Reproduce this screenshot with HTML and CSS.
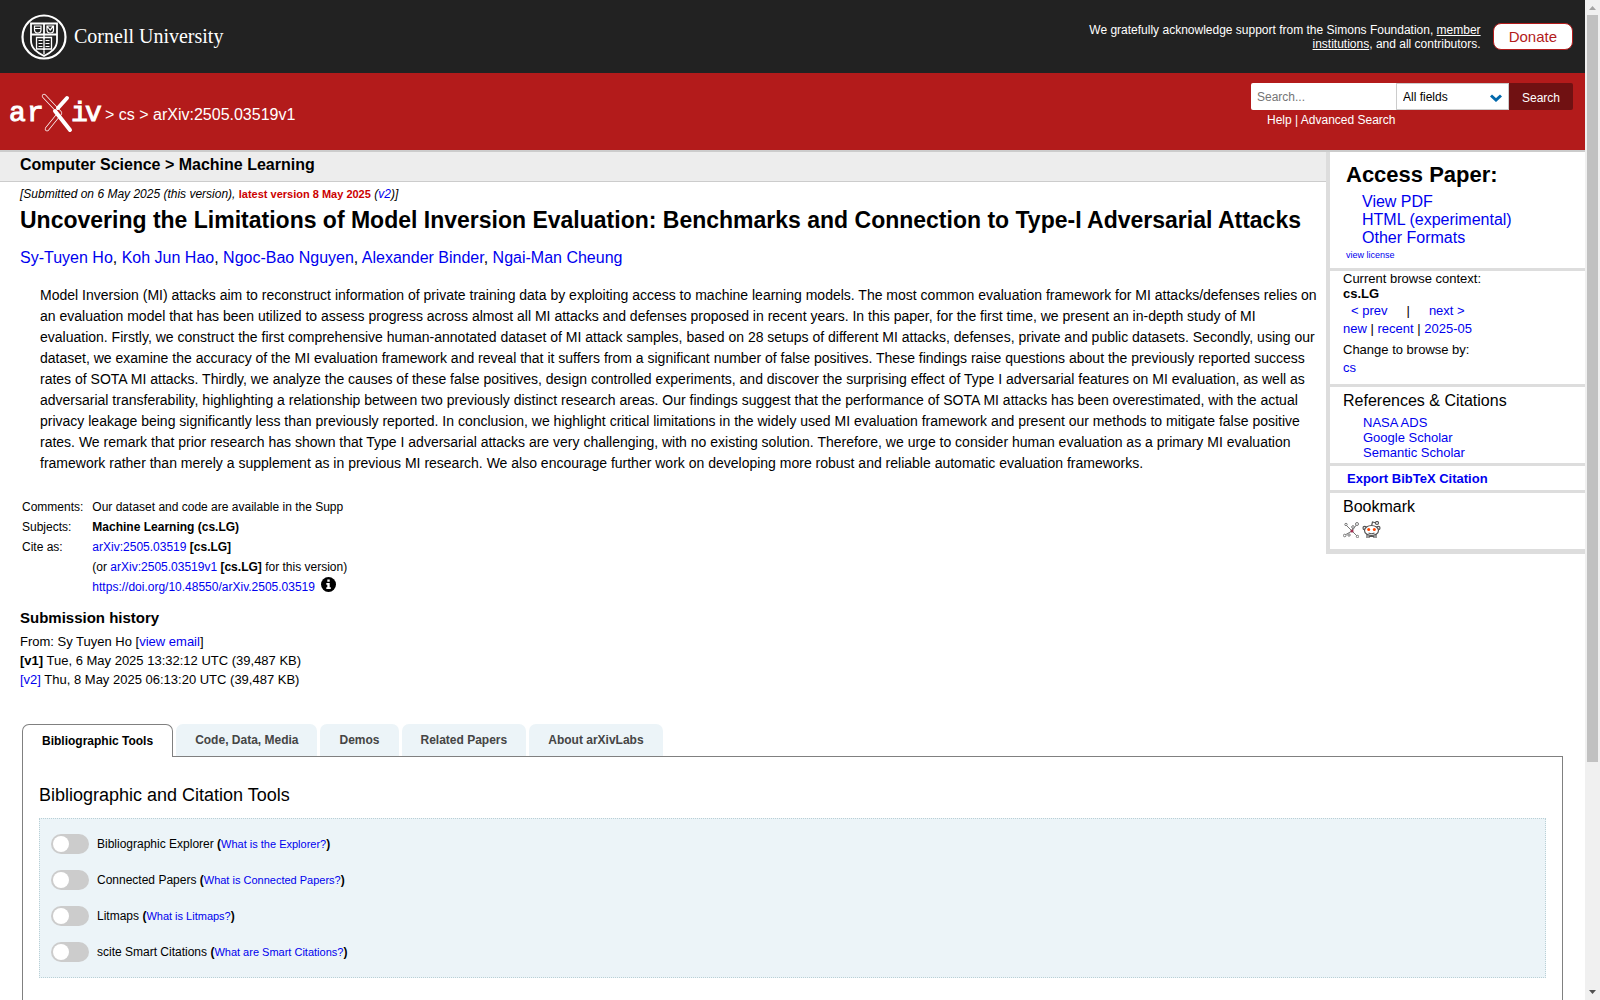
FILE: index.html
```html
<!DOCTYPE html>
<html lang="en">
<head>
<meta charset="utf-8">
<title>[2505.03519v1] Uncovering the Limitations of Model Inversion Evaluation</title>
<link rel="stylesheet" href="styles.css">
</head>
<body>
<div class="page">
  <header>
    <div class="cornell-bar">
      <a class="cornell" href="#">
        <svg width="46" height="46" viewBox="0 0 46 46" fill="none" stroke="#fff" aria-hidden="true">
          <circle cx="23" cy="23" r="21.5" stroke-width="2.200"/>
          <path stroke-width="1.800" d="M10 9.500h26v17c0 8-6 12-13 15.500c-7-3.500-13-7.500-13-15.500zM10 20.500h26M23 9.500v11"/>
          <path stroke-width="1.200" d="M13.500 12h6.500v4c0 2-1.500 3-3.200 3s-3.300-1-3.300-3zM14 14.500h6M26 12h6.500v4c0 2-1.500 3-3.200 3s-3.300-1-3.300-3zM26 12l3.200 4 3.300-4"/>
          <path stroke-width="1.300" d="M15.500 23.500h6.500l1 1 1-1h6.500v11.500h-6.500l-1 1-1-1h-6.500zM23 20.500v20"/>
          <path stroke-width="1" d="M17.500 26.500h4M17.500 29.500h4M17.500 32.500h4M24.500 26.500h4M24.500 29.500h4M24.500 32.500h4"/>
        </svg>
        <span>Cornell University</span>
      </a>
      <div class="support">
        <p>We gratefully acknowledge support from the Simons Foundation, <a href="#">member institutions</a>, and all contributors.</p>
        <a class="donate" href="#">Donate</a>
      </div>
    </div>
    <div class="brand-bar">
      <div class="crumbs">
        <a href="#" class="logo" aria-label="arXiv">
          <svg width="93" height="42" viewBox="0 0 93 42" aria-hidden="true">
            <g class="logo-text"><text x="-1 17" y="28">ar</text><text x="61 75" y="28">iv</text></g>
            <g fill="none" stroke-linecap="round" stroke-linejoin="round">
              <path stroke="#fff" stroke-width="4.400" d="M34 3L50 20L37 36"/>
              <path stroke="#b31b1b" stroke-width="3" d="M34 3L50 20L37 36"/>
              <path stroke="#fff" stroke-width="4" d="M57 5L48 15M45 18L60 37"/>
            </g>
          </svg>
        </a>
        <span>&gt; <a href="#">cs</a> &gt; arXiv:2505.03519v1</span>
      </div>
      <form class="search">
        <div class="search-row">
          <input type="text" placeholder="Search..." aria-label="Search term">
          <div class="select-wrap">
            <select aria-label="Field to search"><option>All fields</option></select>
            <svg width="12" height="8" viewBox="0 0 12 8" aria-hidden="true"><path d="M1 1.500L6 6l5-4.500" fill="none" stroke="#0068ac" stroke-width="3"/></svg>
          </div>
          <button type="button">Search</button>
        </div>
        <p><a href="#">Help</a> | <a href="#">Advanced Search</a></p>
      </form>
    </div>
  </header>

  <div class="content">
    <main>
      <div class="subject">Computer Science &gt; Machine Learning</div>
      <article>
        <p class="dateline">[Submitted on 6 May 2025 (this version), <strong>latest version 8 May 2025</strong> (<a href="#">v2</a>)]</p>
        <h1>Uncovering the Limitations of Model Inversion Evaluation: Benchmarks and Connection to Type-I Adversarial Attacks</h1>
        <p class="authors"><a href="#">Sy-Tuyen Ho</a>, <a href="#">Koh Jun Hao</a>, <a href="#">Ngoc-Bao Nguyen</a>, <a href="#">Alexander Binder</a>, <a href="#">Ngai-Man Cheung</a></p>
        <blockquote>Model Inversion (MI) attacks aim to reconstruct information of private training data by exploiting access to machine learning models. The most common evaluation framework for MI attacks/defenses relies on an evaluation model that has been utilized to assess progress across almost all MI attacks and defenses proposed in recent years. In this paper, for the first time, we present an in-depth study of MI evaluation. Firstly, we construct the first comprehensive human-annotated dataset of MI attack samples, based on 28 setups of different MI attacks, defenses, private and public datasets. Secondly, using our dataset, we examine the accuracy of the MI evaluation framework and reveal that it suffers from a significant number of false positives. These findings raise questions about the previously reported success rates of SOTA MI attacks. Thirdly, we analyze the causes of these false positives, design controlled experiments, and discover the surprising effect of Type I adversarial features on MI evaluation, as well as adversarial transferability, highlighting a relationship between two previously distinct research areas. Our findings suggest that the performance of SOTA MI attacks has been overestimated, with the actual privacy leakage being significantly less than previously reported. In conclusion, we highlight critical limitations in the widely used MI evaluation framework and present our methods to mitigate false positive rates. We remark that prior research has shown that Type I adversarial attacks are very challenging, with no existing solution. Therefore, we urge to consider human evaluation as a primary MI evaluation framework rather than merely a supplement as in previous MI research. We also encourage further work on developing more robust and reliable automatic evaluation frameworks.</blockquote>
        <table class="meta">
          <tr><td>Comments:</td><td>Our dataset and code are available in the Supp</td></tr>
          <tr><td>Subjects:</td><td><b>Machine Learning (cs.LG)</b></td></tr>
          <tr><td>Cite as:</td><td><a href="#">arXiv:2505.03519</a> <b>[cs.LG]</b></td></tr>
          <tr><td></td><td>(or <a href="#">arXiv:2505.03519v1</a> <b>[cs.LG]</b> for this version)</td></tr>
          <tr><td></td><td><a href="#">https://doi.org/10.48550/arXiv.2505.03519</a>
            <svg class="info" width="15" height="15" viewBox="0 0 15 15" aria-hidden="true"><circle cx="7.500" cy="7.500" r="7.500"/><path fill="#fff" d="M6.300 2.500h2.400v2.300H6.300zM5.300 6h3.400v4.300h1.100v1.700H5.300v-1.700h1V7.700h-1z"/></svg></td></tr>
        </table>
        <section class="history">
          <h2>Submission history</h2>
          <p>From: Sy Tuyen Ho [<a href="#">view email</a>]</p>
          <p><b>[v1]</b> Tue, 6 May 2025 13:32:12 UTC (39,487 KB)</p>
          <p><a href="#">[v2]</a> Thu, 8 May 2025 06:13:20 UTC (39,487 KB)</p>
        </section>
      </article>
    </main>
    <aside>
      <section class="access">
        <h2>Access Paper:</h2>
        <ul><li><a href="#">View PDF</a></li><li><a href="#">HTML (experimental)</a></li><li><a href="#">Other Formats</a></li></ul>
        <a class="license" href="#">view license</a>
      </section>
      <section class="browse">
        <p>Current browse context:</p>
        <p><b>cs.LG</b></p>
        <p class="prevnext"><a href="#">&lt; prev</a><span>|</span><a href="#">next &gt;</a></p>
        <p class="list"><a href="#">new</a> | <a href="#">recent</a> | <a href="#">2025-05</a></p>
        <p class="change">Change to browse by:</p>
        <p class="list"><a href="#">cs</a></p>
      </section>
      <section class="refs">
        <h3>References &amp; Citations</h3>
        <ul><li><a href="#">NASA ADS</a></li><li><a href="#">Google Scholar</a></li><li><a href="#">Semantic Scholar</a></li></ul>
      </section>
      <section class="export"><button type="button">Export BibTeX Citation</button></section>
      <section class="bookmark">
        <h3>Bookmark</h3>
        <div class="marks">
          <a href="#" aria-label="BibSonomy"><svg width="16" height="16" viewBox="0 0 16 16" fill="none" stroke="#777"><path d="M3 3l6 6 5 5M9 9l5-7M9 9l-7 4M9 9l1-4"/><g fill="#fff"><circle cx="3" cy="2.500" r="1.200"/><circle cx="14" cy="2" r="1.500"/><circle cx="10" cy="5" r="1.300"/><circle cx="1.700" cy="13.500" r="1.300"/><circle cx="6" cy="13" r="1.200"/><circle cx="14.500" cy="14.500" r="1.200"/></g><circle cx="9" cy="9" r="1.600" fill="#a03050" stroke="none"/></svg></a>
          <a href="#" aria-label="Reddit"><svg width="19" height="18" viewBox="0 0 19 18" fill="none" stroke="#555" stroke-width="1.200"><path d="M9.500 5l1-4 3.500 1M5 13v4M14 13v4M7 17v-1.500h5V17"/><circle cx="15" cy="2" r="1.500"/><circle cx="2.700" cy="7" r="1.700"/><circle cx="16.300" cy="7" r="1.700"/><ellipse cx="9.500" cy="9.500" rx="7" ry="5" fill="#fff"/><path d="M6.500 12q3 1.500 6 0"/><g fill="#ff4500" stroke="none"><circle cx="6.700" cy="8.500" r="1.500"/><circle cx="12.300" cy="8.500" r="1.500"/></g></svg></a>
        </div>
      </section>
    </aside>
  </div>

  <section class="labs">
    <div class="tabs">
      <button type="button" class="active">Bibliographic Tools</button>
      <button type="button">Code, Data, Media</button>
      <button type="button">Demos</button>
      <button type="button">Related Papers</button>
      <button type="button">About arXivLabs</button>
    </div>
    <div class="panel">
      <h2>Bibliographic and Citation Tools</h2>
      <div class="tools">
        <div class="tool"><input type="checkbox" id="t1"><p><label for="t1">Bibliographic Explorer</label> <b>(</b><a href="#">What is the Explorer?</a><b>)</b></p></div>
        <div class="tool"><input type="checkbox" id="t2"><p><label for="t2">Connected Papers</label> <b>(</b><a href="#">What is Connected Papers?</a><b>)</b></p></div>
        <div class="tool"><input type="checkbox" id="t3"><p><label for="t3">Litmaps</label> <b>(</b><a href="#">What is Litmaps?</a><b>)</b></p></div>
        <div class="tool"><input type="checkbox" id="t4"><p><label for="t4">scite Smart Citations</label> <b>(</b><a href="#">What are Smart Citations?</a><b>)</b></p></div>
      </div>
    </div>
  </section>
</div>
<div class="scrollbar" aria-hidden="true">
  <svg width="15" height="14" viewBox="0 0 15 14"><path fill="#a3a3a3" d="M4 10h7L7.500 6z"/></svg>
  <div class="track"><div class="thumb"></div></div>
  <svg width="15" height="14" viewBox="0 0 15 14"><path fill="#505050" d="M4 4h7L7.500 8z"/></svg>
</div>
</body>
</html>
```
FILE: styles.css
```css
* { box-sizing: border-box; }
body {
  margin: 0;
  display: flex;
  height: 100vh;
  overflow: hidden;
  background: #fff;
  color: #000;
  font-family: "Liberation Sans", Arial, sans-serif;
  font-size: 13px;
}
h1, h2, h3, p, ul, blockquote { margin: 0; padding: 0; }
ul { list-style: none; }
a { color: #00e; text-decoration: none; }
button, input, select { font-family: inherit; }
svg { display: block; }

.page { flex: 1; min-width: 0; overflow: hidden; }

.cornell-bar {
  display: flex;
  justify-content: space-between;
  align-items: center;
  height: 73px;
  padding: 0 12px 0 21px;
  background: #222;
  color: #fff;
}
.cornell { display: flex; align-items: center; gap: 7px; color: #fff; font: 20px "Liberation Serif", serif; }
.support { display: flex; align-items: center; gap: 12px; }
.support p { width: 400px; text-align: right; font-size: 12px; line-height: 14px; }
.support p a { color: #fff; text-decoration: underline; }
.donate {
  padding: 0 15px;
  border: 1px solid #b31b1b;
  border-radius: 8px;
  background: #fff;
  color: #b31b1b;
  font-size: 15px;
  line-height: 25px;
}

.brand-bar {
  display: flex;
  justify-content: space-between;
  height: 79px;
  padding: 10px 12px 0 10px;
  border-bottom: 2px solid #ccc;
  background: #b31b1b;
  color: #fff;
}
.brand-bar a { color: #fff; }
.crumbs { display: flex; align-items: center; gap: 2px; height: 62px; font-size: 16px; line-height: 20px; }
.crumbs span { padding-top: 1px; }
.logo svg { overflow: visible; }
.logo-text { fill: #fff; stroke: #fff; stroke-width: 1px; font: 28px "Liberation Mono", monospace; }
.search-row { display: flex; height: 27px; }
.search-row input { width: 145px; padding: 0 6px; border: 0; border-radius: 2px 0 0 2px; font-size: 12px; }
.search-row input::placeholder { color: #757575; }
.select-wrap { position: relative; width: 113px; }
.select-wrap select {
  width: 100%;
  height: 27px;
  padding: 0 6px;
  border: 1px solid #ccc;
  border-radius: 0;
  appearance: none;
  background: #fff;
  color: #000;
  font-size: 12px;
}
.select-wrap svg { position: absolute; right: 7px; top: 11px; }
.search-row button { width: 64px; padding: 2px 0 0; border: 0; border-radius: 0 2px 2px 0; background: #701112; color: #fff; font-size: 12px; }
.search p { padding: 3px 0 0 16px; font-size: 12px; line-height: 14px; }

.content { display: flex; align-items: flex-start; }
main { flex: 1; min-width: 0; }
.subject { height: 30px; padding-left: 20px; border-bottom: 1px solid #ccc; background: #ededed; font-size: 16px; font-weight: bold; line-height: 25px; }
article { padding: 4px 0 0 20px; }
.dateline { font-size: 12px; font-style: italic; line-height: 16px; }
.dateline strong { color: #c00; font-size: 11px; font-style: normal; }
h1 { padding-top: 4px; font-size: 23px; line-height: 28px; white-space: nowrap; }
.authors { padding-top: 14px; font-size: 16px; line-height: 20px; }
blockquote { margin: 17px 3px 23px 20px; font-size: 14px; line-height: 21px; }
.meta { border-spacing: 0; font-size: 12px; }
.meta td { height: 20px; padding: 0 7px 0 2px; line-height: 19px; }
.meta .info { display: inline-block; margin-left: 3px; vertical-align: -1px; }
.history { padding-top: 11px; font-size: 13px; line-height: 19px; }
.history h2 { padding-bottom: 4px; font-size: 15px; line-height: 20px; }

aside { width: 259px; border: solid #ddd; border-width: 0 0 5px 4px; }
aside section { padding-left: 13px; border-bottom: 3px solid #ddd; }
aside section:last-child { border-bottom: 0; }
aside h3 { font-size: 16px; font-weight: normal; line-height: 20px; }
.access { height: 119px; padding: 8px 0 0 16px; }
.access h2 { font-size: 22px; line-height: 30px; padding-bottom: 3px; }
.access ul { padding-left: 16px; font-size: 16px; line-height: 18px; }
.access .license { display: block; font-size: 9px; line-height: 16px; }
.browse { height: 116px; line-height: 15px; }
.browse .prevnext { display: flex; gap: 19px; padding: 1px 0 0 8px; line-height: 18px; }
.browse .list { line-height: 18px; }
.browse .change { padding-top: 3px; line-height: 18px; }
.refs { height: 79px; padding-top: 4px; }
.refs ul { padding: 4px 0 0 20px; line-height: 15px; }
.export { height: 27px; }
.export button { padding: 0 4px; border: 0; background: none; color: #00e; font-size: 13px; font-weight: bold; line-height: 26px; }
.bookmark { height: 56px; padding-top: 4px; }
.marks { display: flex; align-items: center; gap: 3px; padding-top: 4px; }

.labs { padding: 35px 22px 0; }
.tabs { display: flex; align-items: flex-end; gap: 3px; }
.tabs button {
  height: 32px;
  padding: 0 19px;
  border: 0;
  border-radius: 7px 7px 0 0;
  background: #ecf4f8;
  color: #454545;
  font-size: 12px;
  font-weight: bold;
}
.tabs .active { position: relative; height: 33px; margin-bottom: -1px; border: 1px solid #808080; border-bottom: 0; background: #fff; color: #000; }
.panel { height: 400px; padding: 26px 16px 0; border: 1px solid #808080; }
.panel h2 { font-size: 18px; font-weight: normal; line-height: 24px; }
.tools { display: flex; flex-direction: column; gap: 16px; margin-top: 11px; padding: 15px 11px; border: 1px dotted #b9d0d6; background: #ecf4f8; font-size: 12px; }
.tool { display: flex; align-items: center; height: 20px; }
.tool a { font-size: 11px; }
.tool input { width: 38px; height: 20px; margin: 0 8px 0 0; padding: 2px; border-radius: 10px; appearance: none; background: #ccc; }
.tool input::before { content: ""; display: block; width: 16px; height: 16px; border-radius: 50%; background: #fff; }

.scrollbar { display: flex; flex-direction: column; width: 15px; background: #f0f0f0; }
.track { flex: 1; padding: 1px 2px; }
.thumb { height: 77%; background: #c1c1c1; }
```
